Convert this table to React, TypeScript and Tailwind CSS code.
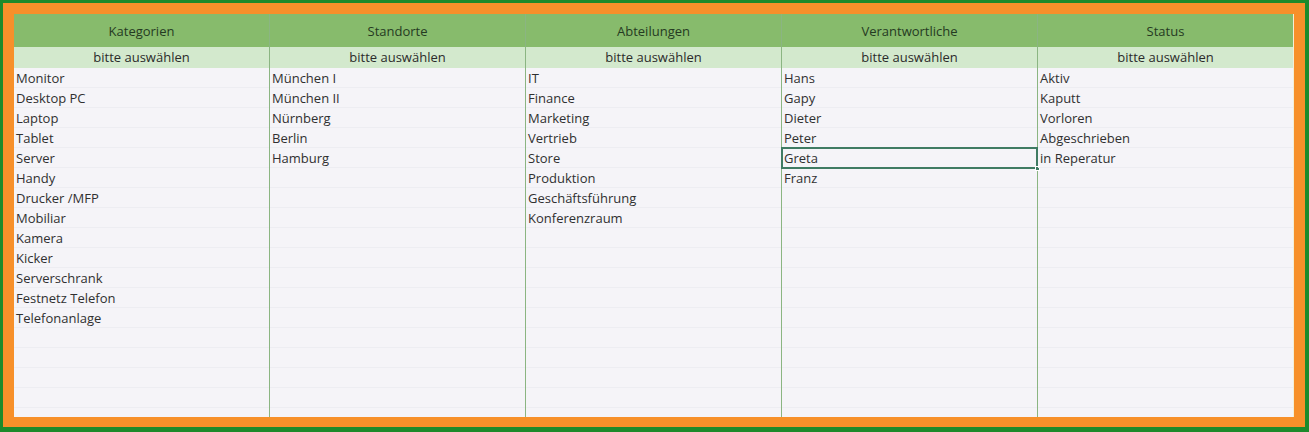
const columns = [
  {
    title: "Kategorien",
    items: [
      "Monitor",
      "Desktop PC",
      "Laptop",
      "Tablet",
      "Server",
      "Handy",
      "Drucker /MFP",
      "Mobiliar",
      "Kamera",
      "Kicker",
      "Serverschrank",
      "Festnetz Telefon",
      "Telefonanlage",
    ],
  },
  {
    title: "Standorte",
    items: ["München I", "München II", "Nürnberg", "Berlin", "Hamburg"],
  },
  {
    title: "Abteilungen",
    items: [
      "IT",
      "Finance",
      "Marketing",
      "Vertrieb",
      "Store",
      "Produktion",
      "Geschäftsführung",
      "Konferenzraum",
    ],
  },
  {
    title: "Verantwortliche",
    items: ["Hans", "Gapy", "Dieter", "Peter", "Greta", "Franz"],
  },
  {
    title: "Status",
    items: ["Aktiv", "Kaputt", "Vorloren", "Abgeschrieben", "in Reperatur"],
  },
];

const ROWS = 18;

export default function App() {
  return (
    <div
      className="w-[1309px] h-[432px] bg-[#1d8a2b] pt-[3px] pl-[3px] pr-[4px] pb-[5px]"
      style={{ fontFamily: '"Open Sans", "Noto Sans", sans-serif' }}
    >
      <div className="w-full h-full bg-[#f7902a] pt-[11px] pl-[11px] pr-[11px] pb-[10px]">
        <div className="grid grid-cols-5 h-full bg-[#f5f4f8] overflow-hidden">
          {columns.map((col, ci) => (
            <div
              key={col.title}
              className={`flex flex-col border-r ${
                ci === columns.length - 1 ? "border-[#f3efd6]" : "border-[#8bb582]"
              }`}
            >
              <div className="h-[33px] shrink-0 bg-[#87bb6c] flex items-center justify-center pt-[2px] text-[13px] text-[#253a22]">
                {col.title}
              </div>
              <div className="h-[21px] shrink-0 bg-[#d3e9cd] flex items-center justify-center pt-px text-[13px] text-[#2b2b2b]">
                bitte auswählen
              </div>
              {Array.from({ length: ROWS }).map((_, ri) => {
                const selected = ci === 3 && ri === 4;
                return (
                  <div
                    key={ri}
                    className={`relative h-[20px] shrink-0 flex items-center pl-[2px] pt-[2px] text-[13px] text-[#303030] ${
                      selected ? "" : "border-b border-[#ededf2]"
                    }`}
                  >
                    {col.items[ri] ?? ""}
                    {selected && (
                      <>
                        <div className="absolute left-[-1px] right-[-1px] top-[-1px] bottom-[-1px] border-2 border-[#3f7b63]" />
                        <div className="absolute right-[-3px] bottom-[-3px] w-[5px] h-[5px] bg-[#3f7b63] border border-white" />
                      </>
                    )}
                  </div>
                );
              })}
            </div>
          ))}
        </div>
      </div>
    </div>
  );
}
